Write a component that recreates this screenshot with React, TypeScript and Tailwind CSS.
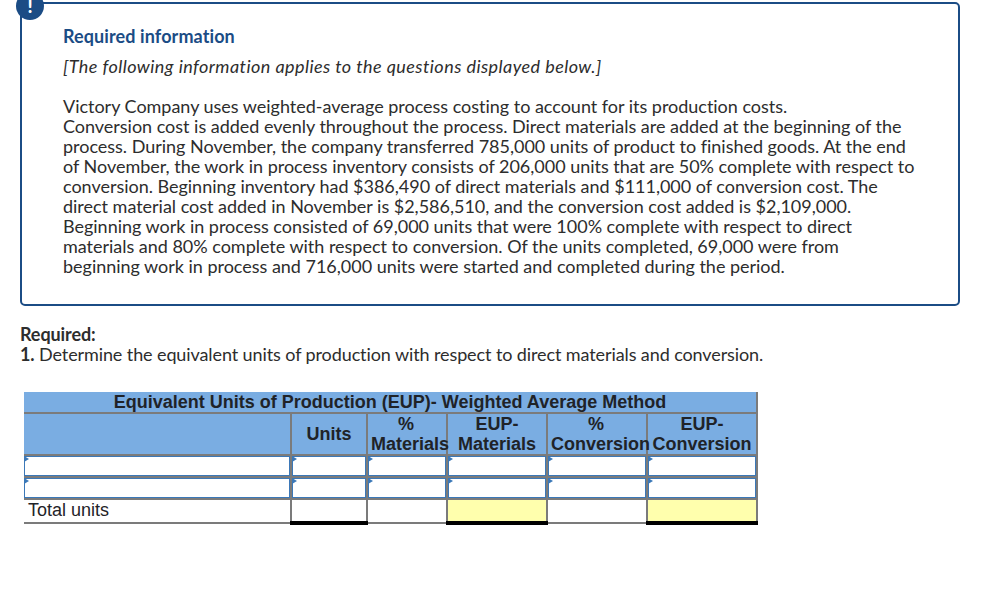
const LINES = [
  "Victory Company uses weighted-average process costing to account for its production costs.",
  "Conversion cost is added evenly throughout the process. Direct materials are added at the beginning of the",
  "process. During November, the company transferred 785,000 units of product to finished goods. At the end",
  "of November, the work in process inventory consists of 206,000 units that are 50% complete with respect to",
  "conversion. Beginning inventory had $386,490 of direct materials and $111,000 of conversion cost. The",
  "direct material cost added in November is $2,586,510, and the conversion cost added is $2,109,000.",
  "Beginning work in process consisted of 69,000 units that were 100% complete with respect to direct",
  "materials and 80% complete with respect to conversion. Of the units completed, 69,000 were from",
  "beginning work in process and 716,000 units were started and completed during the period.",
];

const InputCell = ({ className = "" }: { className?: string }) => (
  <td className={`relative p-0 h-[22px] border-2 border-[#7b7b7b] bg-white ${className}`}>
    <div className="h-full border border-[#3b78b8]" />
    <span className="absolute left-0 top-0 border-y-[3px] border-l-[5px] border-y-transparent border-l-[#3b78b8]" />
  </td>
);

const Head = ({ children, className = "", colSpan }: { children: React.ReactNode; className?: string; colSpan?: number }) => (
  <th colSpan={colSpan} className={`p-0 border-2 border-[#7b7b7b] text-center font-bold leading-[20px] whitespace-nowrap ${className}`}>
    {children}
  </th>
);

const InputRow = () => (
  <tr>
    <InputCell className="border-l-0" />
    <InputCell />
    <InputCell />
    <InputCell />
    <InputCell />
    <InputCell />
  </tr>
);

export default function App() {
  return (
    <div className="w-[1004px] h-[606px] overflow-hidden bg-white text-[#2d2d2d] font-['Lato','Open_Sans',sans-serif] [font-variant-ligatures:none]">
      <div className="relative ml-5 mr-11 mt-[2px] h-[304px] rounded-[5px] border-2 border-[#1b4c85] pl-[41px] pt-[20px]">
        <span className="absolute -left-[6px] -top-[12px] flex h-7 w-7 items-center justify-center rounded-full bg-[#1b4c85] text-[18px] font-black leading-none text-white">
          !
        </span>
        <h2 className="text-[18px] leading-6 font-bold text-[#1b4c85] tracking-[0.1px]">Required information</h2>
        <p className="mt-[6px] text-[18px] leading-6 italic tracking-[0.44px]">
          [The following information applies to the questions displayed below.]
        </p>
        <div className="mt-[18px] text-[18px] leading-5 tracking-[-0.02px] whitespace-nowrap">
          {LINES.map((line) => (
            <p key={line}>{line}</p>
          ))}
        </div>
      </div>

      <div className="ml-5 mt-[19px] text-[18px] tracking-[-0.1px]">
        <p className="font-bold leading-[19px]">Required:</p>
        <p className="leading-5">
          <b>1.</b> Determine the equivalent units of production with respect to direct materials and conversion.
        </p>
      </div>

      <table className="ml-6 mt-[28px] w-[733px] table-fixed border-collapse text-[18px] font-['Liberation_Sans',Arial,sans-serif] text-[#1f2328]">
        <colgroup>
          <col className="w-[267px]" />
          <col className="w-[76px]" />
          <col className="w-[80px]" />
          <col className="w-[100px]" />
          <col className="w-[100px]" />
          <col className="w-[110px]" />
        </colgroup>
        <thead className="bg-[#7aade2]">
          <tr>
            <Head className="border-t-0 border-l-0 h-[21px]" colSpan={6}>
              Equivalent Units of Production (EUP)- Weighted Average Method
            </Head>
          </tr>
          <tr>
            <Head className="border-l-0 h-[42px]"> </Head>
            <Head>Units</Head>
            <Head className="pl-[3px]">
              %&nbsp;<br />Materials
            </Head>
            <Head>
              EUP-<br />Materials
            </Head>
            <Head className="pl-[3px]">
              %&nbsp;<br />Conversion
            </Head>
            <Head>
              EUP-<br />Conversion
            </Head>
          </tr>
        </thead>
        <tbody>
          <InputRow />
          <InputRow />
          <tr>
            <td className="h-[24px] p-0 pl-[4px] pb-[2px] border-2 border-l-0 border-[#7b7b7b] text-[18px] leading-5 font-normal">Total units</td>
            <td className="p-0 border-2 border-[#7b7b7b] border-t-black border-b-[4px] border-b-black" />
            <td className="p-0 border-2 border-[#7b7b7b]" />
            <td className="p-0 border-2 border-[#7b7b7b] border-t-black border-b-[4px] border-b-black bg-[#ffffad]" />
            <td className="p-0 border-2 border-[#7b7b7b]" />
            <td className="p-0 border-2 border-[#7b7b7b] border-t-black border-b-[4px] border-b-black bg-[#ffffad]" />
          </tr>
        </tbody>
      </table>
    </div>
  );
}
